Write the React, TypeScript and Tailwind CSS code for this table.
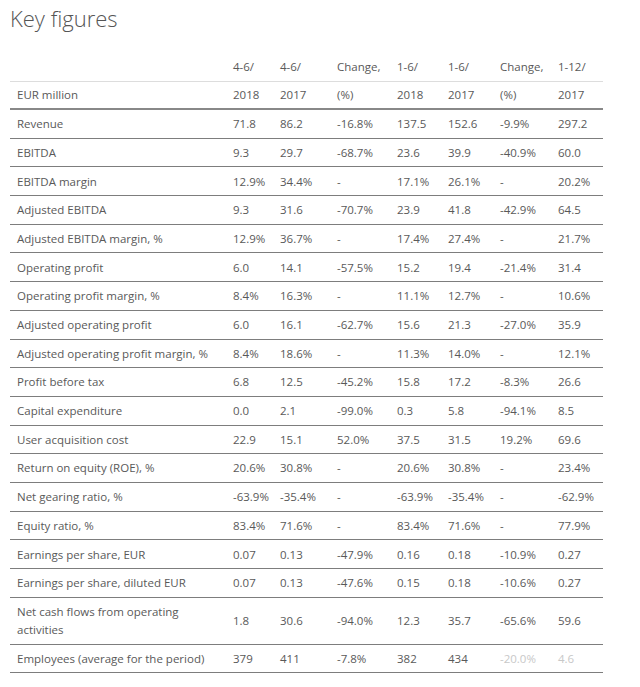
const rows: [string, string, string, string, string, string, string, string][] = [
  ['Revenue', '71.8', '86.2', '-16.8%', '137.5', '152.6', '-9.9%', '297.2'],
  ['EBITDA', '9.3', '29.7', '-68.7%', '23.6', '39.9', '-40.9%', '60.0'],
  ['EBITDA margin', '12.9%', '34.4%', '-', '17.1%', '26.1%', '-', '20.2%'],
  ['Adjusted EBITDA', '9.3', '31.6', '-70.7%', '23.9', '41.8', '-42.9%', '64.5'],
  ['Adjusted EBITDA margin, %', '12.9%', '36.7%', '-', '17.4%', '27.4%', '-', '21.7%'],
  ['Operating profit', '6.0', '14.1', '-57.5%', '15.2', '19.4', '-21.4%', '31.4'],
  ['Operating profit margin, %', '8.4%', '16.3%', '-', '11.1%', '12.7%', '-', '10.6%'],
  ['Adjusted operating profit', '6.0', '16.1', '-62.7%', '15.6', '21.3', '-27.0%', '35.9'],
  ['Adjusted operating profit margin, %', '8.4%', '18.6%', '-', '11.3%', '14.0%', '-', '12.1%'],
  ['Profit before tax', '6.8', '12.5', '-45.2%', '15.8', '17.2', '-8.3%', '26.6'],
  ['Capital expenditure', '0.0', '2.1', '-99.0%', '0.3', '5.8', '-94.1%', '8.5'],
  ['User acquisition cost', '22.9', '15.1', '52.0%', '37.5', '31.5', '19.2%', '69.6'],
  ['Return on equity (ROE), %', '20.6%', '30.8%', '-', '20.6%', '30.8%', '-', '23.4%'],
  ['Net gearing ratio, %', '-63.9%', '-35.4%', '-', '-63.9%', '-35.4%', '-', '-62.9%'],
  ['Equity ratio, %', '83.4%', '71.6%', '-', '83.4%', '71.6%', '-', '77.9%'],
  ['Earnings per share, EUR', '0.07', '0.13', '-47.9%', '0.16', '0.18', '-10.9%', '0.27'],
  ['Earnings per share, diluted EUR', '0.07', '0.13', '-47.6%', '0.15', '0.18', '-10.6%', '0.27'],
]

const grid = 'grid grid-cols-[223px_47px_57px_60px_51px_52px_58px_45px] items-center'

export default function App() {
  return (
    <div className="w-[640px] h-[687px] bg-white text-[#595959] font-['Open_Sans',sans-serif] text-[11.5px] overflow-hidden">
      <h1 className="pl-[10px] pt-[3px] text-[22px] font-light text-[#555] leading-[30px]">Key figures</h1>

      <div className="ml-[10px] mt-[20px] w-[593px]">
        {/* header */}
        <div className={`${grid} h-[29px] border-b border-[#ddd]`}>
          <div />
          <div>4-6/</div>
          <div>4-6/</div>
          <div>Change,</div>
          <div>1-6/</div>
          <div>1-6/</div>
          <div>Change,</div>
          <div>1-12/</div>
        </div>
        <div className={`${grid} h-[28px] border-b-2 border-[#888]`}>
          <div className="pl-[7px]">EUR million</div>
          <div>2018</div>
          <div>2017</div>
          <div>(%)</div>
          <div>2018</div>
          <div>2017</div>
          <div>(%)</div>
          <div>2017</div>
        </div>

        {rows.map((r, i) => (
          <div key={i} className={`${grid} h-[28.7px] border-b border-[#7d7d7d]`}>
            <div className="pl-[7px]">{r[0]}</div>
            {r.slice(1).map((v, j) => (
              <div key={j}>{v}</div>
            ))}
          </div>
        ))}

        <div className={`${grid} h-[47px] border-b border-[#7d7d7d]`}>
          <div className="pl-[7px] leading-[18px]">
            Net cash flows from operating
            <br />
            activities
          </div>
          <div>1.8</div>
          <div>30.6</div>
          <div>-94.0%</div>
          <div>12.3</div>
          <div>35.7</div>
          <div>-65.6%</div>
          <div>59.6</div>
        </div>
        <div className={`${grid} h-[28px] border-b border-[#7d7d7d]`}>
          <div className="pl-[7px]">Employees (average for the period)</div>
          <div>379</div>
          <div>411</div>
          <div>-7.8%</div>
          <div>382</div>
          <div>434</div>
          <div className="text-[#c8c8c8]">-20.0%</div>
          <div className="text-[#c8c8c8]">4.6</div>
        </div>
      </div>
    </div>
  )
}
